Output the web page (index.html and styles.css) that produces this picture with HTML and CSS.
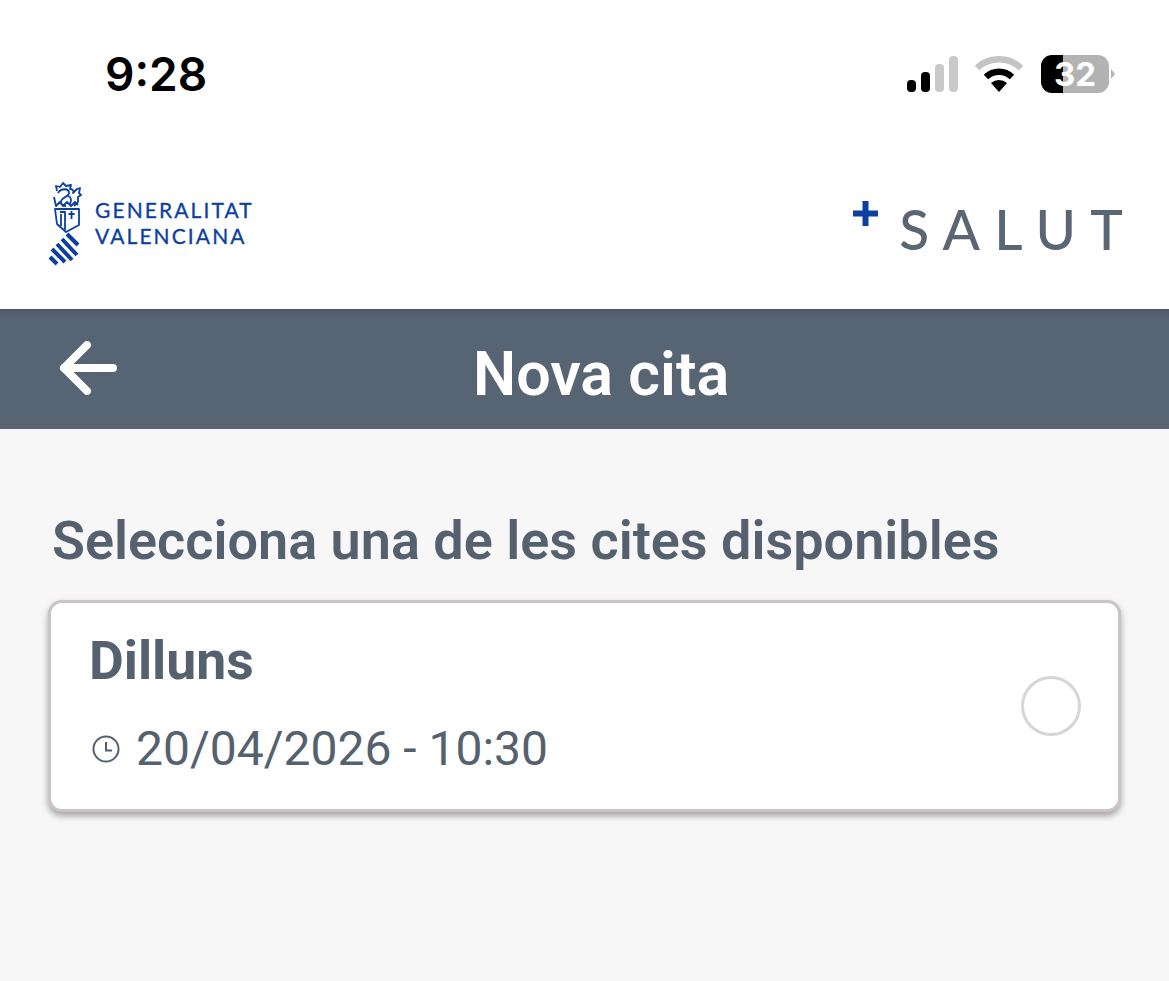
FILE: index.html
```html
<!DOCTYPE html>
<html lang="ca">
<head>
<meta charset="utf-8">
<title>Nova cita</title>
<link rel="stylesheet" href="styles.css">
</head>
<body>
<div class="status">
  <span class="time">9:28</span>
  <div class="status-icons">
    <svg class="signal" width="52" height="36" viewBox="0 0 52 36">
      <rect x="0" y="24" width="9" height="12" rx="4" fill="#000"/>
      <rect x="14" y="16" width="9" height="20" rx="4" fill="#000"/>
      <rect x="28" y="8" width="9" height="28" rx="4" fill="#c9c9c9"/>
      <rect x="42" y="0" width="9" height="36" rx="4" fill="#c9c9c9"/>
    </svg>
    <svg class="wifi" width="50" height="36" viewBox="0 0 50 36">
      <path d="M3 12 A32 32 0 0 1 47 12" fill="none" stroke="#c4c4c4" stroke-width="6.5"/>
      <path d="M12 21 A19 19 0 0 1 38 21" fill="none" stroke="#000" stroke-width="6.5"/>
      <path d="M17 27 A12 12 0 0 1 33 27 L25 36 Z" fill="#000"/>
    </svg>
    <div class="battery"><span class="battery-level">32</span></div>
    <span class="battery-tip"></span>
  </div>
</div>
<div class="brand">
  <div class="gva">
    <svg class="crest" width="34" height="84" viewBox="0 0 34 84">
      <g fill="none" stroke="#0b3fa0" stroke-width="1.8" stroke-linejoin="round">
        <path d="M9 9 L8 4 L12 5 L15 1 L18 4 L23 3 L22 7 C25 7 26 9 25 11 L29 7 L32 6 L31 11 L33 13 L30 15 L30 20 L26 24"/>
        <path d="M10 11 C13 6 21 6 21 11 C21 15 14 15 13 19 C12 22 15 24 18 24"/>
        <path d="M20 14 C23 15 24 18 22 22"/>
        <path d="M6 15 L8 24 L12 20 L15 24 L19 20 L23 24 L27 20 L30 23"/>
        <path d="M7 27 H31 V43 L18 50 L9 42 Z"/>
        <path d="M12 30 H17 V48 M13 32 V44"/>
        <path d="M23.500 29 V37 M20.500 32 H26.500"/>
      </g>
      <g stroke="#0b3fa0" stroke-width="4" fill="none">
        <path d="M19 52 L30 63"/>
        <path d="M14 57 L29 73"/>
        <path d="M9 62 L24 78"/>
        <path d="M4 67 L17 80"/>
        <path d="M2 75 L9 82"/>
      </g>
    </svg>
    <div class="gva-name">GENERALITAT<br>VALENCIANA</div>
  </div>
  <div class="salut">
    <svg class="plus" width="25" height="25" viewBox="0 0 25 25"><path d="M9.5 0h6v9.5H25v6h-9.5V25h-6v-9.500H0v-6h9.500z" fill="#0b3fa0"/></svg>
    <span class="salut-word">SALUT</span>
  </div>
</div>
<header class="bar">
  <svg class="back" width="60" height="54" viewBox="0 0 60 54">
    <path d="M28 4 L5 27 L28 50 M5 27 H54" fill="none" stroke="#fff" stroke-width="8" stroke-linecap="round" stroke-linejoin="round"/>
  </svg>
  <h1 class="bar-title">Nova cita</h1>
</header>
<main class="content">
  <h2 class="prompt">Selecciona una de les cites disponibles</h2>
  <div class="card">
    <div class="card-text">
      <div class="day">Dilluns</div>
      <div class="when">
        <svg class="clock" width="28" height="28" viewBox="0 0 28 28">
          <circle cx="14" cy="14" r="12.500" fill="none" stroke="#56616f" stroke-width="2"/>
          <path d="M14 7 V15.500 H20" fill="none" stroke="#56616f" stroke-width="2"/>
        </svg>
        <span>20/04/2026 - 10:30</span>
      </div>
    </div>
    <span class="radio"></span>
  </div>
</main>
</body>
</html>
```
FILE: styles.css
```css
* { box-sizing: border-box; }
html, body { margin: 0; padding: 0; }
body {
  width: 1169px;
  height: 981px;
  overflow: hidden;
  background: #f7f7f7;
  font-family: Roboto, "Liberation Sans", sans-serif;
  color: #56616f;
}
.status {
  height: 150px;
  background: #fff;
  display: flex;
  justify-content: space-between;
  align-items: flex-start;
  padding: 44px 54px 0 105px;
}
.time {
  font-family: Inter, "Liberation Sans", sans-serif;
  font-weight: 600;
  font-size: 46px;
  line-height: 60px;
  color: #000;
}
.status-icons {
  display: flex;
  align-items: center;
  height: 60px;
}
.signal { margin-right: 15px; }
.wifi { margin-right: 17px; }
.battery {
  width: 68px;
  height: 38px;
  border-radius: 11px;
  background: linear-gradient(to right, #000 0, #000 32%, #b3b3b3 32%, #b3b3b3 100%);
  display: flex;
  align-items: center;
  justify-content: center;
}
.battery-level {
  font-family: Inter, "Liberation Sans", sans-serif;
  font-weight: 700;
  font-size: 33px;
  line-height: 38px;
  color: #fff;
}
.battery-tip {
  width: 0;
  height: 0;
  margin-left: 2px;
  border-left: 4px solid #b3b3b3;
  border-top: 5px solid transparent;
  border-bottom: 5px solid transparent;
}
.brand {
  height: 159px;
  background: #fff;
  display: flex;
  justify-content: space-between;
  align-items: flex-start;
  padding: 32px 46px 0 48px;
}
.gva {
  display: flex;
  align-items: center;
  gap: 13px;
}
.crest { display: block; }
.gva-name {
  font-family: Lato, "Liberation Sans", sans-serif;
  font-size: 21px;
  letter-spacing: 2.100px;
  line-height: 25.500px;
  -webkit-text-stroke: 0.300px #0b3fa0;
  color: #0b3fa0;
  margin-top: -3px;
}
.salut {
  display: flex;
  align-items: flex-start;
  margin-top: 19px;
}
.plus { margin-right: 21px; }
.salut-word {
  font-family: Lato, "Liberation Sans", sans-serif;
  font-size: 55px;
  font-weight: 500;
  line-height: 54px;
  letter-spacing: 14.250px;
  color: #5a6673;
  margin-right: -14.250px;
  margin-top: 1px;
}
.bar {
  height: 120px;
  background: linear-gradient(to bottom, #4f5865 0, #576473 10px, #576473 100%);
  display: flex;
  align-items: center;
  padding-left: 59px;
  color: #fff;
}
.back { margin-top: -2px; }
.bar-title {
  margin: 10px 0 0 354px;
  font-size: 61px;
  font-weight: 600;
  line-height: 68px;
  color: #fff;
}
.content {
  padding: 80px 48px 0 48px;
}
.prompt {
  margin: 0 0 27px 4px;
  font-size: 54px;
  font-weight: 600;
  line-height: 64px;
  color: #56616f;
}
.card {
  height: 212px;
  background: #fff;
  border: 3px solid #cbc4c7;
  border-radius: 14px;
  box-shadow: 0 4px 6px rgba(90, 80, 85, 0.5);
  display: flex;
  align-items: center;
  justify-content: space-between;
  padding: 0 37px 0 38px;
}
.card-text { margin-top: -2px; }
.day {
  font-size: 53.500px;
  font-weight: 700;
  line-height: 60px;
  color: #56616f;
}
.when {
  display: flex;
  align-items: center;
  gap: 16px;
  margin-top: 28px;
  font-size: 48px;
  line-height: 60px;
}
.clock { display: block; margin-left: 3px; }
.radio {
  width: 60px;
  height: 60px;
  border: 3px solid #d5d6d9;
  border-radius: 50%;
}
```
